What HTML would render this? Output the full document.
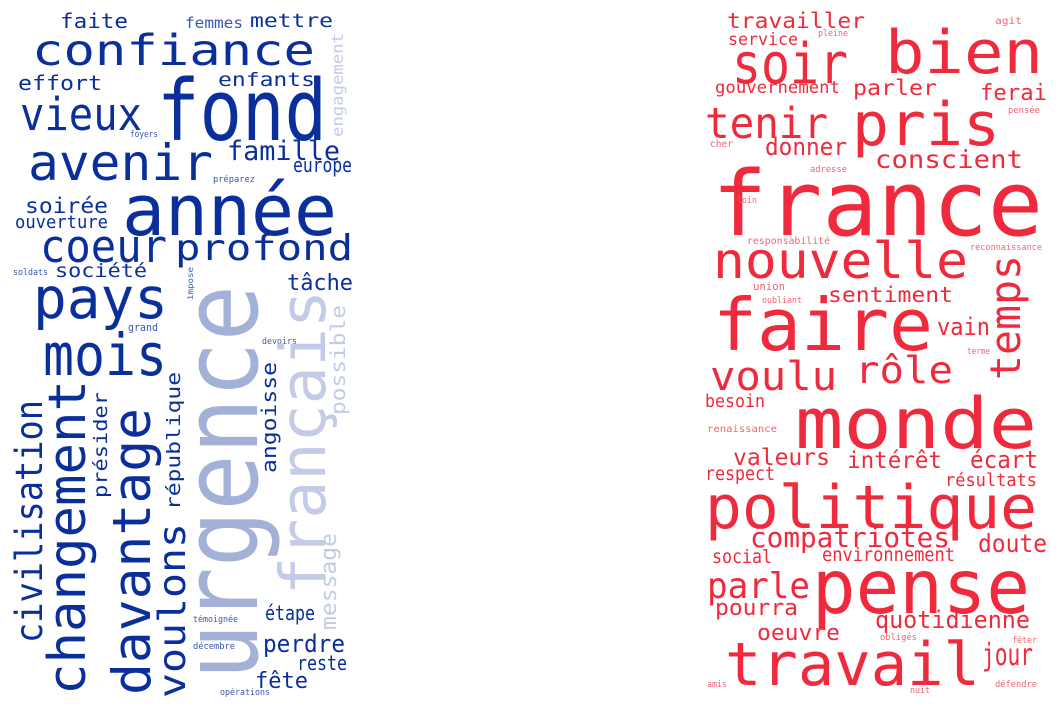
<!DOCTYPE html>
<html><head><meta charset="utf-8"><style>
html,body{margin:0;padding:0;background:#fff;width:1060px;height:713px;overflow:hidden}
svg{display:block}
text{font-family:"DejaVu Sans Mono","Liberation Mono",monospace}
.b{fill:#0a2f9b}.bs{fill:#3a58ad}.ul{fill:#a3b1d9}.fl{fill:#c3cbe6}
.r{fill:#ee2a3c}.rs{fill:#f26471}
</style></head><body>
<svg width="1060" height="713" xmlns="http://www.w3.org/2000/svg" lengthAdjust="spacingAndGlyphs">
<g class="b">
<text x="60" y="28" font-size="20" textLength="68" lengthAdjust="spacingAndGlyphs">faite</text>
<text class="bs" x="185" y="28" font-size="15" textLength="58" lengthAdjust="spacingAndGlyphs">femmes</text>
<text x="250" y="27" font-size="19" textLength="83" lengthAdjust="spacingAndGlyphs">mettre</text>
<text x="32" y="65" font-size="43" textLength="283" lengthAdjust="spacingAndGlyphs">confiance</text>
<text x="18" y="90" font-size="20" textLength="84" lengthAdjust="spacingAndGlyphs">effort</text>
<text x="218" y="86" font-size="19" textLength="97" lengthAdjust="spacingAndGlyphs">enfants</text>
<text x="157" y="140" font-size="85" textLength="170" lengthAdjust="spacingAndGlyphs">fond</text>
<text x="20" y="130" font-size="45" textLength="122" lengthAdjust="spacingAndGlyphs">vieux</text>
<text x="28" y="180" font-size="50" textLength="185" lengthAdjust="spacingAndGlyphs">avenir</text>
<text x="227" y="160" font-size="27" textLength="113" lengthAdjust="spacingAndGlyphs">famille</text>
<text x="293" y="172" font-size="20" textLength="59" lengthAdjust="spacingAndGlyphs">europe</text>
<text class="bs" x="130" y="137" font-size="9" textLength="28" lengthAdjust="spacingAndGlyphs">foyers</text>
<text class="bs" x="213" y="182" font-size="9" textLength="42" lengthAdjust="spacingAndGlyphs">préparez</text>
<text x="122" y="235" font-size="70" textLength="215" lengthAdjust="spacingAndGlyphs">année</text>
<text x="25" y="213" font-size="21" textLength="83" lengthAdjust="spacingAndGlyphs">soirée</text>
<text x="15" y="228" font-size="18" textLength="93" lengthAdjust="spacingAndGlyphs">ouverture</text>
<text x="40" y="262" font-size="45" textLength="127" lengthAdjust="spacingAndGlyphs">coeur</text>
<text x="175" y="260" font-size="36" textLength="178" lengthAdjust="spacingAndGlyphs">profond</text>
<text x="55" y="277" font-size="19" textLength="92" lengthAdjust="spacingAndGlyphs">société</text>
<text class="bs" x="13" y="275" font-size="9" textLength="35" lengthAdjust="spacingAndGlyphs">soldats</text>
<text x="287" y="290" font-size="22" textLength="66" lengthAdjust="spacingAndGlyphs">tâche</text>
<text x="33" y="318" font-size="57" textLength="135" lengthAdjust="spacingAndGlyphs">pays</text>
<text class="bs" x="128" y="331" font-size="11" textLength="30" lengthAdjust="spacingAndGlyphs">grand</text>
<text class="bs" x="262" y="344" font-size="9" textLength="35" lengthAdjust="spacingAndGlyphs">devoirs</text>
<text x="43" y="375" font-size="58" textLength="124" lengthAdjust="spacingAndGlyphs">mois</text>
<text x="265" y="620" font-size="20" textLength="50" lengthAdjust="spacingAndGlyphs">étape</text>
<text class="bs" x="193" y="622" font-size="9" textLength="45" lengthAdjust="spacingAndGlyphs">témoignée</text>
<text class="bs" x="193" y="649" font-size="9" textLength="42" lengthAdjust="spacingAndGlyphs">décembre</text>
<text x="263" y="652" font-size="24" textLength="82" lengthAdjust="spacingAndGlyphs">perdre</text>
<text x="297" y="670" font-size="20" textLength="50" lengthAdjust="spacingAndGlyphs">reste</text>
<text x="255" y="688" font-size="22" textLength="53" lengthAdjust="spacingAndGlyphs">fête</text>
<text class="bs" x="220" y="695" font-size="9" textLength="50" lengthAdjust="spacingAndGlyphs">opérations</text>
<text transform="translate(42,643) rotate(-90)" font-size="37" textLength="243" lengthAdjust="spacingAndGlyphs">civilisation</text>
<text transform="translate(85,695) rotate(-90)" font-size="52" textLength="315" lengthAdjust="spacingAndGlyphs">changement</text>
<text transform="translate(150,695) rotate(-90)" font-size="53" textLength="287" lengthAdjust="spacingAndGlyphs">davantage</text>
<text transform="translate(185,698) rotate(-90)" font-size="37" textLength="175" lengthAdjust="spacingAndGlyphs">voulons</text>
<text transform="translate(107,498) rotate(-90)" font-size="19" textLength="106" lengthAdjust="spacingAndGlyphs">présider</text>
<text transform="translate(180,510) rotate(-90)" font-size="19" textLength="138" lengthAdjust="spacingAndGlyphs">république</text>
<text transform="translate(276,473) rotate(-90)" font-size="20" textLength="111" lengthAdjust="spacingAndGlyphs">angoisse</text>
<text class="bs" transform="translate(193,300) rotate(-90)" font-size="8" textLength="33" lengthAdjust="spacingAndGlyphs">impose</text>
<text class="ul" transform="translate(257,680) rotate(-90)" font-size="104" textLength="395" lengthAdjust="spacingAndGlyphs">urgence</text>
<text class="fl" transform="translate(325,595) rotate(-90)" font-size="63" textLength="305" lengthAdjust="spacingAndGlyphs">français</text>
<text class="fl" transform="translate(345,415) rotate(-90)" font-size="20" textLength="110" lengthAdjust="spacingAndGlyphs">possible</text>
<text class="fl" transform="translate(336,630) rotate(-90)" font-size="22" textLength="97" lengthAdjust="spacingAndGlyphs">message</text>
<text class="fl" transform="translate(343,137) rotate(-90)" font-size="16" textLength="104" lengthAdjust="spacingAndGlyphs">engagement</text>
</g>
<g class="r">
<text x="727" y="28" font-size="21" textLength="138" lengthAdjust="spacingAndGlyphs">travailler</text>
<text x="728" y="45" font-size="17" textLength="70" lengthAdjust="spacingAndGlyphs">service</text>
<text class="rs" x="818" y="36" font-size="9" textLength="30" lengthAdjust="spacingAndGlyphs">pleine</text>
<text class="rs" x="995" y="24" font-size="10" textLength="27" lengthAdjust="spacingAndGlyphs">agit</text>
<text x="732" y="83" font-size="56" textLength="116" lengthAdjust="spacingAndGlyphs">soir</text>
<text x="885" y="73" font-size="60" textLength="158" lengthAdjust="spacingAndGlyphs">bien</text>
<text x="715" y="93" font-size="17" textLength="125" lengthAdjust="spacingAndGlyphs">gouvernement</text>
<text x="853" y="95" font-size="21" textLength="84" lengthAdjust="spacingAndGlyphs">parler</text>
<text x="980" y="100" font-size="22" textLength="67" lengthAdjust="spacingAndGlyphs">ferai</text>
<text class="rs" x="1008" y="113" font-size="9" textLength="32" lengthAdjust="spacingAndGlyphs">pensée</text>
<text x="705" y="138" font-size="43" textLength="123" lengthAdjust="spacingAndGlyphs">tenir</text>
<text x="852" y="145" font-size="60" textLength="148" lengthAdjust="spacingAndGlyphs">pris</text>
<text x="765" y="155" font-size="24" textLength="82" lengthAdjust="spacingAndGlyphs">donner</text>
<text class="rs" x="710" y="147" font-size="10" textLength="23" lengthAdjust="spacingAndGlyphs">cher</text>
<text x="875" y="168" font-size="25" textLength="148" lengthAdjust="spacingAndGlyphs">conscient</text>
<text class="rs" x="810" y="172" font-size="9" textLength="37" lengthAdjust="spacingAndGlyphs">adresse</text>
<text x="712" y="235" font-size="90" textLength="331" lengthAdjust="spacingAndGlyphs">france</text>
<text class="rs" x="737" y="203" font-size="9" textLength="20" lengthAdjust="spacingAndGlyphs">loin</text>
<text class="rs" x="747" y="244" font-size="10" textLength="83" lengthAdjust="spacingAndGlyphs">responsabilité</text>
<text class="rs" x="970" y="250" font-size="9" textLength="72" lengthAdjust="spacingAndGlyphs">reconnaissance</text>
<text x="713" y="278" font-size="50" textLength="255" lengthAdjust="spacingAndGlyphs">nouvelle</text>
<text transform="translate(1020,380) rotate(-90)" font-size="42" textLength="125" lengthAdjust="spacingAndGlyphs">temps</text>
<text class="rs" x="753" y="290" font-size="11" textLength="32" lengthAdjust="spacingAndGlyphs">union</text>
<text x="828" y="302" font-size="21" textLength="125" lengthAdjust="spacingAndGlyphs">sentiment</text>
<text class="rs" x="762" y="303" font-size="9" textLength="40" lengthAdjust="spacingAndGlyphs">oubliant</text>
<text x="713" y="350" font-size="72" textLength="220" lengthAdjust="spacingAndGlyphs">faire</text>
<text x="937" y="335" font-size="24" textLength="53" lengthAdjust="spacingAndGlyphs">vain</text>
<text class="rs" x="967" y="354" font-size="9" textLength="23" lengthAdjust="spacingAndGlyphs">terme</text>
<text x="710" y="390" font-size="40" textLength="127" lengthAdjust="spacingAndGlyphs">voulu</text>
<text x="855" y="383" font-size="37" textLength="98" lengthAdjust="spacingAndGlyphs">rôle</text>
<text x="705" y="407" font-size="18" textLength="60" lengthAdjust="spacingAndGlyphs">besoin</text>
<text class="rs" x="707" y="432" font-size="10" textLength="70" lengthAdjust="spacingAndGlyphs">renaissance</text>
<text x="795" y="448" font-size="70" textLength="242" lengthAdjust="spacingAndGlyphs">monde</text>
<text x="733" y="465" font-size="23" textLength="97" lengthAdjust="spacingAndGlyphs">valeurs</text>
<text x="847" y="468" font-size="23" textLength="95" lengthAdjust="spacingAndGlyphs">intérêt</text>
<text x="970" y="468" font-size="24" textLength="68" lengthAdjust="spacingAndGlyphs">écart</text>
<text x="705" y="480" font-size="19" textLength="70" lengthAdjust="spacingAndGlyphs">respect</text>
<text x="945" y="486" font-size="18" textLength="92" lengthAdjust="spacingAndGlyphs">résultats</text>
<text x="705" y="528" font-size="60" textLength="332" lengthAdjust="spacingAndGlyphs">politique</text>
<text x="750" y="547" font-size="28" textLength="200" lengthAdjust="spacingAndGlyphs">compatriotes</text>
<text x="978" y="552" font-size="25" textLength="69" lengthAdjust="spacingAndGlyphs">doute</text>
<text x="712" y="563" font-size="19" textLength="60" lengthAdjust="spacingAndGlyphs">social</text>
<text x="822" y="561" font-size="19" textLength="133" lengthAdjust="spacingAndGlyphs">environnement</text>
<text x="707" y="598" font-size="36" textLength="103" lengthAdjust="spacingAndGlyphs">parle</text>
<text x="812" y="613" font-size="75" textLength="218" lengthAdjust="spacingAndGlyphs">pense</text>
<text x="715" y="615" font-size="22" textLength="83" lengthAdjust="spacingAndGlyphs">pourra</text>
<text x="875" y="628" font-size="24" textLength="155" lengthAdjust="spacingAndGlyphs">quotidienne</text>
<text x="757" y="640" font-size="22" textLength="83" lengthAdjust="spacingAndGlyphs">oeuvre</text>
<text class="rs" x="880" y="640" font-size="9" textLength="37" lengthAdjust="spacingAndGlyphs">obligés</text>
<text class="rs" x="1012" y="643" font-size="9" textLength="25" lengthAdjust="spacingAndGlyphs">fêter</text>
<text x="725" y="685" font-size="60" textLength="255" lengthAdjust="spacingAndGlyphs">travail</text>
<text x="982" y="665" font-size="30" textLength="51" lengthAdjust="spacingAndGlyphs">jour</text>
<text class="rs" x="707" y="687" font-size="9" textLength="20" lengthAdjust="spacingAndGlyphs">amis</text>
<text class="rs" x="995" y="687" font-size="9" textLength="42" lengthAdjust="spacingAndGlyphs">défendre</text>
<text class="rs" x="910" y="693" font-size="9" textLength="20" lengthAdjust="spacingAndGlyphs">nuit</text>
</g>
</svg>
</body></html>
